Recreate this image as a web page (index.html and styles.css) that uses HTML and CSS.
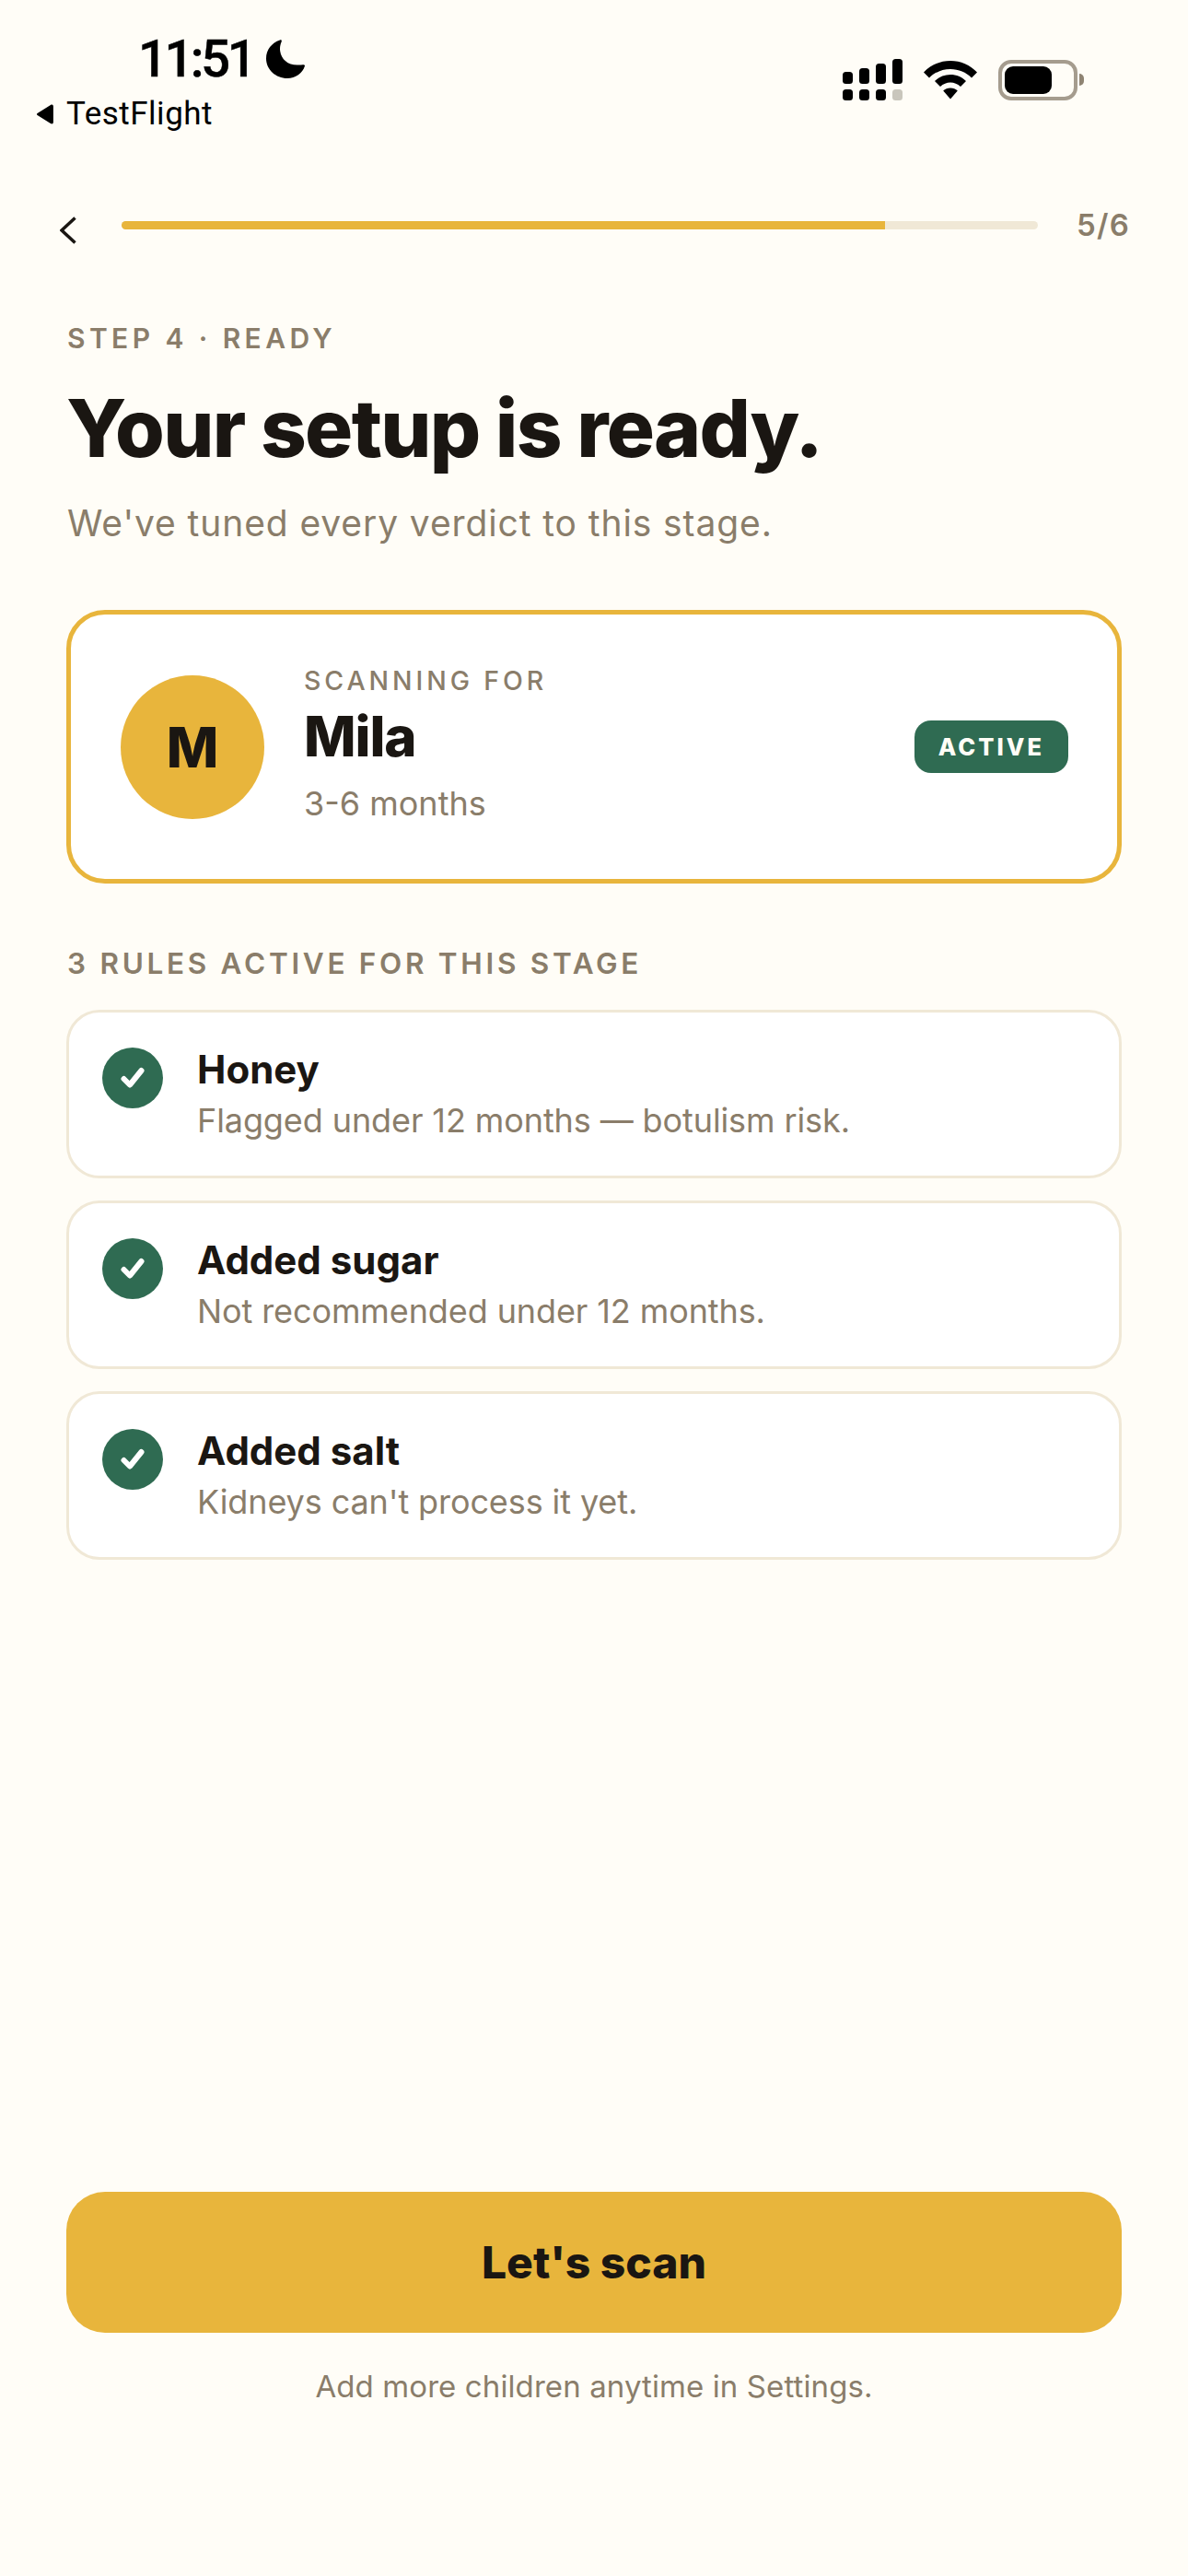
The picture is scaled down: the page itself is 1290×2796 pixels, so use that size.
FILE: index.html
```html
<!DOCTYPE html>
<html lang="en">
<head>
<meta charset="utf-8">
<title>Your setup is ready</title>
<link rel="stylesheet" href="styles.css">
</head>
<body>
<main class="screen">
  <header class="status">
    <div class="status-left">
      <div class="time-row">
        <span class="time">11:51</span>
        <svg class="moon" viewBox="0 0 42 42"><path d="M15 0.5C16.5 0 17.2 1 16.6 2.6C15.2 6 14.7 9 15.2 12.5C16.5 22 24.5 28.5 36 27.5C38.5 27.2 42.5 26.5 42 28.5C39.5 36.5 32 42 23 42C10.5 42 0 32.5 0 20.5C0 11 6 3.5 15 0.5Z"/></svg>
      </div>
      <div class="back-app">
        <svg class="back-tri" viewBox="0 0 22 26"><path d="M1.5 11.5L18 1.2C20 0 21.5 0.8 21.5 3V23C21.5 25.2 20 26 18 24.8L1.5 14.5C0 13.6 0 12.4 1.5 11.5Z"/></svg>
        <span class="app-name">TestFlight</span>
      </div>
    </div>
    <div class="status-right">
      <svg class="signal" viewBox="0 0 65 45">
        <rect x="0" y="14" width="11" height="13" rx="3.5"/><rect x="18" y="10" width="11" height="17" rx="3.5"/><rect x="36" y="5" width="11" height="22" rx="3.5"/><rect x="54" y="0" width="11" height="27" rx="3.5"/>
        <rect x="0" y="33" width="11" height="12" rx="3.5"/><rect x="18" y="33" width="11" height="12" rx="3.5"/><rect x="36" y="33" width="11" height="12" rx="3.5"/><rect class="signal-off" x="54" y="33" width="11" height="12" rx="3.5"/>
      </svg>
      <svg class="wifi" viewBox="0 0 58 42">
        <path d="M29 0C40 0 50.500 4.500 58 12.500L52 18.500C46 12.500 38 9 29 9C20 9 12 12.500 6 18.500L0 12.500C7.500 4.500 18 0 29 0Z"/>
        <path d="M29 15C35.500 15 41.500 17.500 46 22L40 28C36.800 25 33 23.500 29 23.500C25 23.500 21.200 25 18 28L12 22C16.500 17.500 22.500 15 29 15Z"/>
        <path d="M29 29.500C32 29.500 34.800 30.500 36.800 32.500L29 41.500L21.200 32.500C23.200 30.500 26 29.500 29 29.500Z"/>
      </svg>
      <div class="battery">
        <div class="battery-body"><div class="battery-level"></div></div>
        <div class="battery-nub"></div>
      </div>
    </div>
  </header>

  <nav class="topbar">
    <svg class="chevron" viewBox="0 0 18 30"><path d="M16.500 1.500L2 15L16.500 28.500" /></svg>
    <div class="track"><div class="fill"></div></div>
    <span class="count">5/6</span>
  </nav>

  <section class="intro">
    <p class="eyebrow">STEP 4 · READY</p>
    <h1 class="title">Your setup is ready.</h1>
    <p class="subtitle">We've tuned every verdict to this stage.</p>
  </section>

  <section class="profile">
    <div class="avatar">M</div>
    <div class="profile-text">
      <span class="profile-label">SCANNING FOR</span>
      <span class="profile-name">Mila</span>
      <span class="profile-age">3-6 months</span>
    </div>
    <span class="badge">ACTIVE</span>
  </section>

  <h2 class="rules-title">3 RULES ACTIVE FOR THIS STAGE</h2>
  <ul class="rules">
    <li class="rule">
      <span class="check"><svg viewBox="0 0 26 24"><path d="M3.500 13L10 19.500L22.500 4"/></svg></span>
      <div class="rule-text"><strong class="rule-name">Honey</strong><span class="rule-desc">Flagged under 12 months — botulism risk.</span></div>
    </li>
    <li class="rule">
      <span class="check"><svg viewBox="0 0 26 24"><path d="M3.500 13L10 19.500L22.500 4"/></svg></span>
      <div class="rule-text"><strong class="rule-name">Added sugar</strong><span class="rule-desc">Not recommended under 12 months.</span></div>
    </li>
    <li class="rule">
      <span class="check"><svg viewBox="0 0 26 24"><path d="M3.500 13L10 19.500L22.500 4"/></svg></span>
      <div class="rule-text"><strong class="rule-name">Added salt</strong><span class="rule-desc">Kidneys can't process it yet.</span></div>
    </li>
  </ul>

  <footer class="actions">
    <button class="cta">Let's scan</button>
    <p class="hint">Add more children anytime in Settings.</p>
  </footer>
</main>
</body>
</html>
```
FILE: styles.css
```css
* { box-sizing: border-box; margin: 0; padding: 0; }
html, body { height: 100%; }
body { background: #FFFDF7; font-family: Inter, "Liberation Sans", sans-serif; color: #1A1612; }
.screen { height: 2796px; display: flex; flex-direction: column; padding: 0 72px; }

.status { height: 150px; margin: 0 -72px; padding: 36px 113px 0 38px; display: flex; justify-content: space-between; align-items: flex-start; }
.time-row { display: flex; align-items: center; height: 56px; padding-left: 112px; gap: 14px; }
.time { font-family: Roboto, Inter, sans-serif; font-size: 56px; font-weight: 500; line-height: 56px; color: #000; letter-spacing: -3.400px; -webkit-text-stroke: 0.5px #000; }
.moon { width: 42px; height: 42px; fill: #000; }
.back-app { display: flex; align-items: center; gap: 12px; margin-top: 12px; height: 40px; }
.back-tri { width: 22px; height: 22px; fill: #000; }
.app-name { font-family: Roboto, Inter, sans-serif; font-size: 35px; font-weight: 400; line-height: 40px; letter-spacing: 0.500px; color: #000; }
.status-right { display: flex; align-items: center; gap: 23px; margin-top: 28px; }
.signal { width: 65px; height: 45px; fill: #000; }
.signal-off { fill: #C9C6BC; }
.wifi { width: 58px; height: 42px; fill: #000; }
.battery { display: flex; align-items: center; gap: 2px; }
.battery-body { width: 86px; height: 44px; border: 4px solid #A59C8E; border-radius: 14px; padding: 3px; background: #FFFDF7; }
.battery-level { width: 51px; height: 100%; background: #000; border-radius: 9px; }
.battery-nub { width: 5px; height: 13px; background: #8F8473; border-radius: 0 6px 6px 0; }

.topbar { height: 60px; margin-top: 70px; display: flex; align-items: flex-start; }
.chevron { width: 18px; height: 30px; margin: 15px 0 0 -7px; fill: none; stroke: #1A1612; stroke-width: 3.500px; flex: none; }
.track { width: 995px; height: 9px; margin: 20px 0 0 49px; background: #F0E8D6; border-radius: 5px; overflow: hidden; flex: none; }
.fill { width: 83.300%; height: 100%; background: #E8B53C; }
.count { margin-left: 42px; margin-top: 4px; font-size: 33px; font-weight: 600; line-height: 40px; letter-spacing: 1.200px; color: #8A7D6A; }

.intro { padding: 69px 0 0 1px; }
.eyebrow { font-size: 30px; font-weight: 600; line-height: 36px; letter-spacing: 4.400px; color: #8A7D6A; }
.title { margin-top: 30px; font-size: 87px; font-weight: 800; line-height: 100px; letter-spacing: -1.700px; margin-left: -1px; color: #1A1612; }
.subtitle { margin-top: 29px; font-size: 39px; font-weight: 400; line-height: 48px; letter-spacing: 0.900px; color: #8A7D6A; }

.profile { margin-top: 70px; height: 297px; padding: 0 53px 0 54px; display: flex; align-items: center; gap: 43px; background: #fff; border: 5px solid #E8B53C; border-radius: 42px; }
.avatar { width: 156px; height: 156px; border-radius: 50%; background: #E8B53C; display: flex; align-items: center; justify-content: center; font-size: 60px; font-weight: 800; color: #1A1612; flex: none; }
.profile-text { flex: 1; display: flex; flex-direction: column; }
.profile-label { font-size: 28.500px; font-weight: 500; line-height: 34px; letter-spacing: 3.900px; color: #8A7D6A; margin-top: -5px; }
.profile-name { margin-top: 10px; font-size: 60px; font-weight: 800; line-height: 66px; letter-spacing: -1.100px; color: #1A1612; }
.profile-age { margin-top: 18px; font-size: 36px; line-height: 44px; color: #8A7D6A; }
.badge { height: 57px; padding: 0 26px; display: flex; align-items: center; background: #2F6B52; color: #FFFDF7; border-radius: 18px; font-size: 25.500px; font-weight: 800; letter-spacing: 3px; }

.rules-title { margin-top: 68px; padding-left: 1px; font-size: 31.500px; font-weight: 600; line-height: 38px; letter-spacing: 3.700px; color: #8A7D6A; }
.rules { list-style: none; margin-top: 31px; display: flex; flex-direction: column; gap: 24px; }
.rule { height: 183px; padding: 37px 36px 0 36px; display: flex; gap: 37px; align-items: flex-start; background: #fff; border: 3px solid #F0E8D6; border-radius: 36px; }
.check { width: 66px; height: 66px; margin-top: 1px; border-radius: 50%; background: #2F6B52; display: flex; align-items: center; justify-content: center; flex: none; }
.check svg { width: 26px; height: 24px; fill: none; stroke: #fff; stroke-width: 6px; stroke-linecap: round; stroke-linejoin: round; }
.rule-text { display: flex; flex-direction: column; }
.rule-name { font-size: 42px; font-weight: 700; line-height: 50px; color: #1A1612; }
.rule-desc { margin-top: 8px; font-size: 36px; line-height: 44px; letter-spacing: -0.100px; color: #8A7D6A; }

.actions { margin-top: auto; padding-bottom: 186px; display: flex; flex-direction: column; }
.cta { height: 153px; border: 0; border-radius: 42px; background: #E8B53C; color: #1A1612; font-family: inherit; font-size: 48px; font-weight: 800; }
.hint { margin-top: 38px; text-align: center; font-size: 33px; line-height: 40px; letter-spacing: 0.100px; color: #8A7D6A; }
```
